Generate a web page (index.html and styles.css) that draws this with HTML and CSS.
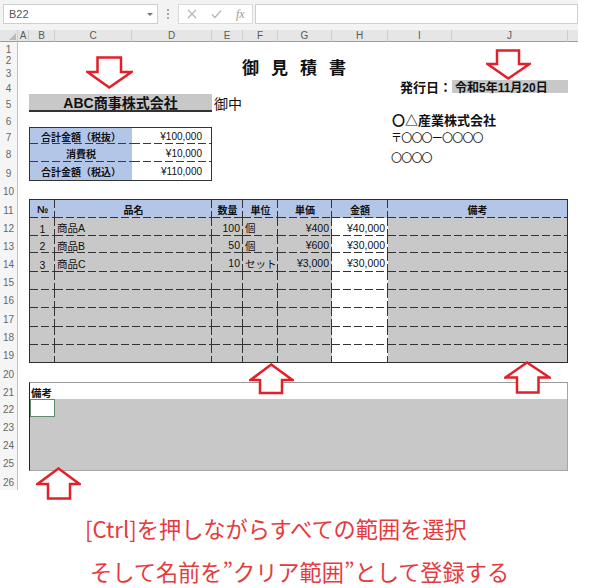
FILE: index.html
```html
<!DOCTYPE html>
<html lang="ja">
<head>
<meta charset="utf-8">
<title>御見積書</title>
<link rel="stylesheet" href="styles.css">
</head>
<body>
<div class="page">
  <div class="fbar">
    <div class="namebox"><span class="nb-text">B22</span><span class="nb-caret"></span></div>
    <div class="grip"><i></i><i></i><i></i></div>
    <div class="fbtns">
      <svg class="fb-icon" width="10" height="10" viewBox="0 0 10 10"><path d="M1 1 L9 9 M9 1 L1 9" stroke="#b4b4b4" stroke-width="1.2" fill="none"/></svg>
      <svg class="fb-icon" width="11" height="10" viewBox="0 0 11 10"><path d="M1 5.5 L4 8.5 L10 1.5" stroke="#b4b4b4" stroke-width="1.2" fill="none"/></svg>
      <span class="fb-fx">fx</span>
    </div>
    <div class="finput"></div>
  </div>

  <div class="sheet">
    <div class="corner"><span class="tri"></span></div>
    <div class="ch">A</div><div class="ch">B</div><div class="ch">C</div><div class="ch">D</div><div class="ch">E</div><div class="ch">F</div><div class="ch">G</div><div class="ch">H</div><div class="ch">I</div><div class="ch">J</div><div class="ch blank"></div>

    <div class="rh">1</div><div class="rh">2</div><div class="rh">3</div><div class="rh">4</div><div class="rh">5</div><div class="rh">6</div><div class="rh">7</div><div class="rh">8</div><div class="rh">9</div><div class="rh">10</div><div class="rh">11</div><div class="rh">12</div><div class="rh">13</div><div class="rh">14</div><div class="rh">15</div><div class="rh">16</div><div class="rh">17</div><div class="rh">18</div><div class="rh">19</div><div class="rh">20</div><div class="rh">21</div><div class="rh">22</div><div class="rh">23</div><div class="rh">24</div><div class="rh">25</div><div class="rh">26</div>

    <div class="title">御見積書</div>
    <div class="issue-label">発行日：</div>
    <div class="issue-date">令和5年11月20日</div>
    <div class="client">ABC商事株式会社</div>
    <div class="onchu">御中</div>
    <div class="company">〇△産業株式会社</div>
    <div class="zip">〒〇〇〇ー〇〇〇〇</div>
    <div class="addr">〇〇〇〇</div>

    <div class="summary">
      <div class="s-label">合計金額（税抜）</div><div class="s-val">¥100,000</div>
      <div class="s-label">消費税</div><div class="s-val">¥10,000</div>
      <div class="s-label">合計金額（税込）</div><div class="s-val">¥110,000</div>
    </div>

    <div class="items">
      <div class="th">№</div><div class="th">品名</div><div class="th">数量</div><div class="th">単位</div><div class="th">単価</div><div class="th">金額</div><div class="th">備考</div>

      <div class="td no">1</div><div class="td">商品A</div><div class="td num">100</div><div class="td">個</div><div class="td num">¥400</div><div class="td num amt">¥40,000</div><div class="td"></div>
      <div class="td no">2</div><div class="td">商品B</div><div class="td num">50</div><div class="td">個</div><div class="td num">¥600</div><div class="td num amt">¥30,000</div><div class="td"></div>
      <div class="td no">3</div><div class="td">商品C</div><div class="td num">10</div><div class="td">セット</div><div class="td num">¥3,000</div><div class="td num amt">¥30,000</div><div class="td"></div>
      <div class="td"></div><div class="td"></div><div class="td"></div><div class="td"></div><div class="td"></div><div class="td amt"></div><div class="td"></div>
      <div class="td"></div><div class="td"></div><div class="td"></div><div class="td"></div><div class="td"></div><div class="td amt"></div><div class="td"></div>
      <div class="td"></div><div class="td"></div><div class="td"></div><div class="td"></div><div class="td"></div><div class="td amt"></div><div class="td"></div>
      <div class="td"></div><div class="td"></div><div class="td"></div><div class="td"></div><div class="td"></div><div class="td amt"></div><div class="td"></div>
      <div class="td"></div><div class="td"></div><div class="td"></div><div class="td"></div><div class="td"></div><div class="td amt"></div><div class="td"></div>
    </div>

    <div class="notes">
      <div class="notes-head">備考</div>
      <div class="notes-body"><div class="sel"></div></div>
    </div>
  </div>

  <div class="instr">
    <div class="l1">[Ctrl]を押しながらすべての範囲を選択</div>
    <div class="l2">そして名前を”クリア範囲”として登録する</div>
  </div>

  <svg class="arrow a1" width="47" height="33" viewBox="0 0 47 33"><path d="M11.5 1.5 H35 V16 H45.5 L23.25 31.5 L1.5 16 H11.5 Z"/></svg>
  <svg class="arrow a2" width="45" height="31" viewBox="0 0 45 31"><path d="M11 1.5 H33 V15 H43.5 L22.25 29.5 L1.5 15 H11 Z"/></svg>
  <svg class="arrow a3" width="45" height="32" viewBox="0 0 45 32"><path d="M22.25 1.5 L43.5 17 H33 V30 H11 V17 H1.5 Z"/></svg>
  <svg class="arrow a4" width="47" height="33" viewBox="0 0 47 33"><path d="M23 1.5 L45.5 16.5 H34.5 V31.5 H13 V16.5 H1.5 Z"/></svg>
  <svg class="arrow a5" width="45" height="33" viewBox="0 0 45 33"><path d="M22.5 1.5 L43.5 17 H34 V31.5 H12 V17 H1.5 Z"/></svg>
</div>
</body>
</html>
```

FILE: styles.css
```css
html, body {
  margin: 0;
  padding: 0;
  overflow: hidden;
  background: #ffffff;
}
body {
  font-family: "Liberation Sans", "Noto Sans CJK JP", sans-serif;
  color: #111;
}
.page {
  position: relative;
  width: 600px;
  height: 588px;
}

/* formula bar */
.fbar {
  display: flex;
  width: 578px;
  height: 30px;
  box-sizing: border-box;
  padding: 4px 0 6px 3px;
  background: #f3f3f3;
}
.namebox {
  width: 155px;
  box-sizing: border-box;
  background: #fff;
  border: 1px solid #cfcfcf;
  display: flex;
  align-items: center;
  justify-content: space-between;
  padding: 0 4px 0 5px;
}
.nb-text {
  font-size: 11px;
  color: #555;
}
.nb-caret {
  width: 0;
  height: 0;
  border-left: 3px solid transparent;
  border-right: 3px solid transparent;
  border-top: 3px solid #777;
}
.grip {
  width: 20px;
  display: flex;
  flex-direction: column;
  align-items: center;
  justify-content: center;
  gap: 2px;
}
.grip i {
  display: block;
  width: 2px;
  height: 2px;
  background: #a8a8a8;
}
.fbtns {
  width: 75px;
  box-sizing: border-box;
  background: #fff;
  border: 1px solid #dadada;
  margin-right: 2px;
  display: flex;
  align-items: center;
  padding-left: 8px;
  gap: 14px;
}
.fb-fx {
  font-family: "Liberation Serif", serif;
  font-style: italic;
  font-size: 12px;
  color: #999;
}
.finput {
  flex: 1;
  background: #fff;
  border: 1px solid #cfcfcf;
}

/* sheet grid */
.sheet {
  display: grid;
  width: 578px;
  grid-template-columns: 18px 11px 26px 77px 80px 31px 35px 54px 56px 64px 116px 10px;
  grid-template-rows: 12px 11px 11px 15px 15px 18px 15px 17px 18px 19px 18px 19px 18px 17px 19px 18px 18px 19px 18px 18px 19px 17px 18px 18px 18px 18px 19px;
}
.corner {
  grid-row: 1;
  grid-column: 1;
  background: #e6e6e6;
  border-bottom: 1px solid #8ea597;
  border-right: 1px solid #cfcfcf;
  box-sizing: border-box;
  display: flex;
  align-items: flex-end;
  justify-content: flex-end;
  padding: 0 1px 1px 0;
}
.tri {
  width: 0;
  height: 0;
  border-left: 7px solid transparent;
  border-bottom: 7px solid #b9b9b9;
}
.ch {
  grid-row: 1;
  background: #e6e6e6;
  border-bottom: 1px solid #8ea597;
  border-right: 1px solid #cdcdcd;
  box-sizing: border-box;
  display: flex;
  align-items: center;
  justify-content: center;
  font-size: 10px;
  color: #5a5a5a;
}
.ch.blank {
  border-right: none;
}
.rh {
  grid-column: 1;
  background: #f5f5f5;
  border-right: 1px solid #b9c9be;
  box-sizing: border-box;
  display: flex;
  align-items: center;
  justify-content: center;
  padding-top: 4px;
  font-size: 10px;
  line-height: 10px;
  color: #666;
}

/* header texts */
.title {
  grid-column: 6 / 10;
  grid-row: 3 / 5;
  display: flex;
  align-items: flex-end;
  justify-content: center;
  padding-bottom: 2px;
  font-size: 17px;
  line-height: 17px;
  font-weight: bold;
  letter-spacing: 12px;
}
.issue-label {
  grid-column: 10;
  grid-row: 5;
  display: flex;
  align-items: center;
  justify-content: flex-end;
  font-size: 13px;
  font-weight: bold;
}
.issue-date {
  grid-column: 11;
  grid-row: 5;
  background: #c8c8c8;
  margin: 1px 0;
  display: flex;
  align-items: center;
  padding-left: 3px;
  font-size: 12px;
  font-weight: bold;
}
.client {
  grid-column: 3 / 6;
  grid-row: 6;
  background: #c8c8c8;
  border-bottom: 2px solid #333;
  box-sizing: border-box;
  display: flex;
  align-items: center;
  justify-content: center;
  font-size: 14px;
  font-weight: bold;
}
.onchu {
  grid-column: 6 / 8;
  grid-row: 6;
  display: flex;
  align-items: center;
  padding-left: 2px;
  font-size: 14px;
}
.company {
  grid-column: 10 / 12;
  grid-row: 7;
  display: flex;
  align-items: flex-end;
  padding-left: 4px;
  font-size: 13px;
  line-height: 15px;
  font-weight: bold;
  margin-bottom: -1px;
}
.zip,
.addr {
  grid-column: 10 / 12;
  display: flex;
  align-items: flex-end;
  padding-left: 3px;
  font-size: 11px;
  line-height: 13px;
  letter-spacing: -0.8px;
}
.zip { grid-row: 8; margin-bottom: -1px; }
.addr { grid-row: 9; margin-bottom: -3px; }

/* summary table */
.summary {
  grid-column: 3 / 6;
  grid-row: 8 / 11;
  display: grid;
  grid-template-columns: 102px 1fr;
  grid-template-rows: 16px 18px 1fr;
  border: 1px solid #333;
  box-sizing: border-box;
  font-size: 10px;
}
.s-label,
.s-val {
  display: flex;
  align-items: center;
  background-image: repeating-linear-gradient(90deg, #3a3a3a 0 8px, transparent 8px 11px);
  background-size: 100% 1px;
  background-position: left bottom;
  background-repeat: no-repeat;
}
.s-label {
  background-color: #b4c6e7;
  justify-content: center;
  font-weight: bold;
}
.s-val {
  background-color: #fff;
  justify-content: flex-end;
  padding-right: 9px;
}
.summary > div:nth-child(n+5) {
  background-image: none;
}

/* items table */
.items {
  grid-column: 3 / 12;
  grid-row: 12 / 21;
  display: grid;
  grid-template-columns: 25px 157px 31px 35px 54px 56px 1fr;
  grid-template-rows: 18px 18px 17px 19px 18px 18px 19px 18px 1fr;
  border: 1px solid #2e2e2e;
  box-sizing: border-box;
  font-size: 10.5px;
}
.items > div {
  display: flex;
  align-items: center;
  padding-top: 1px;
  background-image:
    repeating-linear-gradient(90deg, #333 0 8px, transparent 8px 11px),
    repeating-linear-gradient(180deg, #333 0 8px, transparent 8px 11px);
  background-size: 100% 1px, 1px 100%;
  background-position: left bottom, right top;
  background-repeat: no-repeat;
}
.items > div:nth-child(7n) {
  background-image: repeating-linear-gradient(90deg, #333 0 8px, transparent 8px 11px);
  background-size: 100% 1px;
}
.items > div:nth-child(n+57) {
  background-image: none, repeating-linear-gradient(180deg, #333 0 8px, transparent 8px 11px);
}
.items > div:last-child {
  background-image: none;
}
.th {
  background-color: #b4c6e7;
  justify-content: center;
  font-weight: bold;
  font-size: 10px;
}
.td {
  background-color: #c8c8c8;
  padding-left: 2px;
}
.td.amt {
  background-color: #fff;
}
.td.num {
  justify-content: flex-end;
  padding-left: 0;
  padding-right: 3px;
}
.td.no {
  justify-content: center;
  align-items: flex-end;
  padding-left: 0;
  padding-bottom: 1px;
}

/* notes area */
.notes {
  grid-column: 3 / 12;
  grid-row: 22 / 27;
  display: flex;
  flex-direction: column;
  border-top: 1px solid #9a9a9a;
  border-left: 1px solid #222;
  border-right: 1px solid #a4a4a4;
  border-bottom: 1px solid #a8a8a8;
  box-sizing: border-box;
}
.notes-head {
  height: 16px;
  display: flex;
  align-items: flex-end;
  padding-left: 1px;
  font-size: 10.5px;
  line-height: 12px;
  font-weight: bold;
}
.notes-body {
  flex: 1;
  background: #c8c8c8;
}
.sel {
  width: 25px;
  height: 18px;
  box-sizing: border-box;
  background: #fff;
  border: 1px solid #5f8c6c;
}

/* instruction text */
.instr {
  padding: 17px 0 0 85px;
  font-family: "Noto Sans CJK JP", sans-serif;
  font-size: 22.2px;
  line-height: 43px;
  color: #e53a40;
  white-space: nowrap;
}
.instr .l2 {
  padding-left: 5px;
}

/* overlay arrows */
.arrow {
  position: absolute;
}
.arrow path {
  fill: #fff;
  stroke: #e2202a;
  stroke-width: 2.5;
  stroke-linejoin: miter;
}
.a1 { left: 86px; top: 56px; }
.a2 { left: 486px; top: 49px; }
.a3 { left: 249px; top: 363px; }
.a4 { left: 504px; top: 361px; }
.a5 { left: 36px; top: 467px; }
```
